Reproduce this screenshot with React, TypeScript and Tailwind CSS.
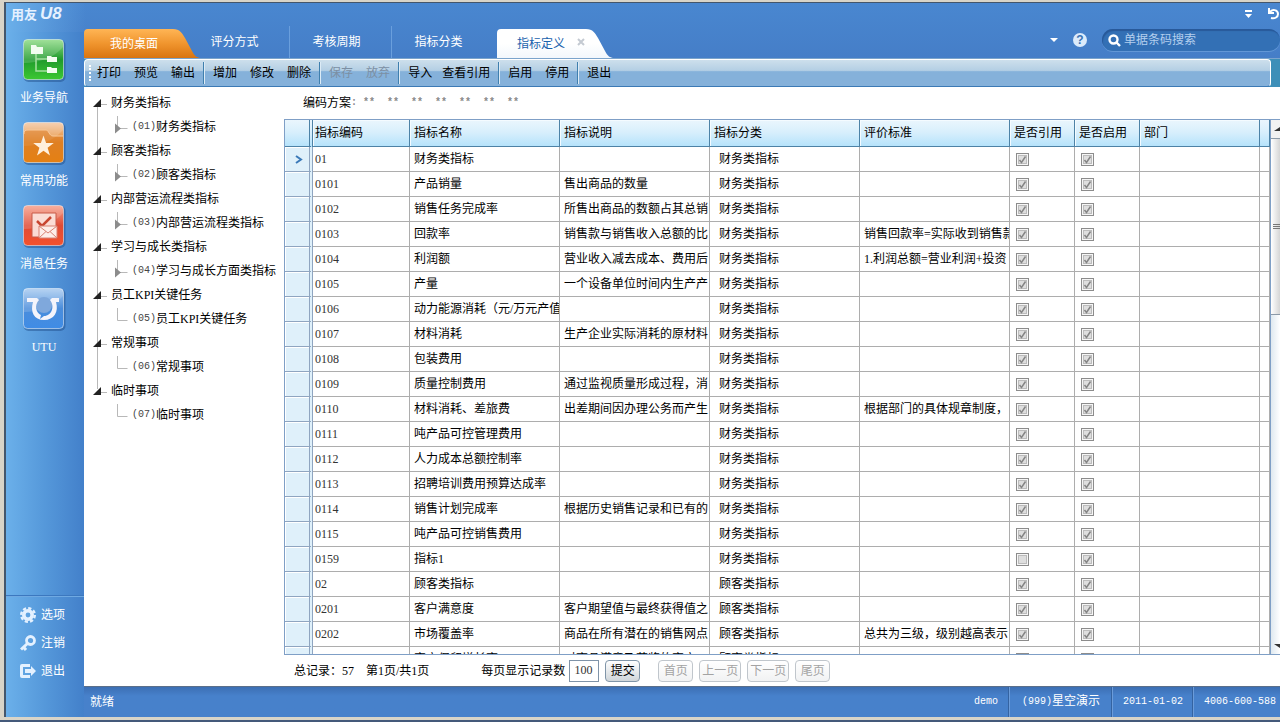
import type { ReactNode } from 'react'

const sideItems = [
  { label: '业务导航', icon: <NavIcon /> },
  { label: '常用功能', icon: <StarIcon /> },
  { label: '消息任务', icon: <TaskIcon /> },
  { label: 'UTU', icon: <UtuIcon /> },
]

const sideLinks = [
  { label: '选项', icon: <GearIcon /> },
  { label: '注销', icon: <KeyIcon /> },
  { label: '退出', icon: <ExitIcon /> },
]

const toolGroups = [
  { items: ['打印', '预览', '输出'] },
  { items: ['增加', '修改', '删除'] },
  { items: ['保存', '放弃'], disabled: true },
  { items: ['导入', '查看引用'], tight: true },
  { items: ['启用', '停用'] },
  { items: ['退出'] },
]

const tree = [
  { label: '财务类指标', code: '(01)', child: '财务类指标', more: true },
  { label: '顾客类指标', code: '(02)', child: '顾客类指标', more: true },
  { label: '内部营运流程类指标', code: '(03)', child: '内部营运流程类指标', more: true },
  { label: '学习与成长类指标', code: '(04)', child: '学习与成长方面类指标', more: true },
  { label: '员工KPI关键任务', code: '(05)', child: '员工KPI关键任务', more: false },
  { label: '常规事项', code: '(06)', child: '常规事项', more: false },
  { label: '临时事项', code: '(07)', child: '临时事项', more: false },
]

type Row = {
  code: string
  name: string
  desc?: string
  kind: string
  standard?: string
  unused?: boolean
}

const rows: Row[] = [
  { code: '01', name: '财务类指标', kind: '财务类指标' },
  { code: '0101', name: '产品销量', desc: '售出商品的数量', kind: '财务类指标' },
  { code: '0102', name: '销售任务完成率', desc: '所售出商品的数额占其总销', kind: '财务类指标' },
  { code: '0103', name: '回款率', desc: '销售款与销售收入总额的比', kind: '财务类指标', standard: '销售回款率=实际收到销售款' },
  { code: '0104', name: '利润额', desc: '营业收入减去成本、费用后', kind: '财务类指标', standard: '1.利润总额=营业利润+投资' },
  { code: '0105', name: '产量', desc: '一个设备单位时间内生产产', kind: '财务类指标' },
  { code: '0106', name: '动力能源消耗（元/万元产值', kind: '财务类指标' },
  { code: '0107', name: '材料消耗', desc: '生产企业实际消耗的原材料', kind: '财务类指标' },
  { code: '0108', name: '包装费用', kind: '财务类指标' },
  { code: '0109', name: '质量控制费用', desc: '通过监视质量形成过程，消', kind: '财务类指标' },
  { code: '0110', name: '材料消耗、差旅费', desc: '出差期间因办理公务而产生', kind: '财务类指标', standard: '根据部门的具体规章制度，' },
  { code: '0111', name: '吨产品可控管理费用', kind: '财务类指标' },
  { code: '0112', name: '人力成本总额控制率', kind: '财务类指标' },
  { code: '0113', name: '招聘培训费用预算达成率', kind: '财务类指标' },
  { code: '0114', name: '销售计划完成率', desc: '根据历史销售记录和已有的', kind: '财务类指标' },
  { code: '0115', name: '吨产品可控销售费用', kind: '财务类指标' },
  { code: '0159', name: '指标1', kind: '财务类指标', unused: true },
  { code: '02', name: '顾客类指标', kind: '顾客类指标' },
  { code: '0201', name: '客户满意度', desc: '客户期望值与最终获得值之', kind: '顾客类指标' },
  { code: '0202', name: '市场覆盖率', desc: '商品在所有潜在的销售网点', kind: '顾客类指标', standard: '总共为三级，级别越高表示' },
  { code: '0203', name: '客户保留增长率', desc: '对商品满意及获奖的客户', kind: '顾客类指标' },
]

const headers = ['指标编码', '指标名称', '指标说明', '指标分类', '评价标准', '是否引用', '是否启用', '部门']

function Tile({ id, from, mid, to, children }: { id: string; from: string; mid: string; to: string; children: ReactNode }) {
  return (
    <svg className="h-11 w-11" viewBox="0 0 44 44" fill="none">
      <defs>
        <linearGradient id={id} x1="0" y1="0" x2="0" y2="1">
          <stop offset="0" stopColor={from} />
          <stop offset="0.5" stopColor={mid} />
          <stop offset="1" stopColor={to} />
        </linearGradient>
      </defs>
      <rect x="1.5" y="2" width="42" height="42" rx="5" fill="#1c4a85" opacity="0.45" />
      <rect x="1.5" y="1.5" width="40" height="40" rx="4" fill={`url(#${id})`} stroke="#ffffff" strokeOpacity="0.5" />
      <path d="M2 25C16 25 32 20 41 9V5a3 3 0 0 0-3-3H5a3 3 0 0 0-3 3Z" fill="#fff" opacity="0.16" />
      {children}
    </svg>
  )
}

function NavIcon() {
  return (
    <Tile id="tile-nav" from="#8fdc86" mid="#1f9a2c" to="#3cc832">
      <path d="M14 16v17h11M14 21h11" stroke="#a5e0a0" strokeWidth="1.5" />
      <path d="M9 7h5l1 2h6v7H9ZM25 18h4l1 1h5v5H25ZM25 29h4l1 1h5v5H25Z" fill="#f2fdf0" />
    </Tile>
  )
}

function StarIcon() {
  return (
    <Tile id="tile-star" from="#f3c7a4" mid="#e58a2c" to="#f08a0c">
      <path d="M2 13c0-3 1-4 4-4h18c3 0 3 6 7 6h10v23a3 3 0 0 1-3 3H5a3 3 0 0 1-3-3Z" fill="#d9761a" opacity="0.5" />
      <path d="M2 13c0-3 1-4 4-4h18c3 0 3 6 7 6h10" stroke="#f9c99a" />
      <path d="m21.500 14.500 2.600 7.600h7.700l-6.200 4.600 2.400 7.800-6.500-4.700-6.500 4.700 2.400-7.800-6.200-4.600h7.700Z" fill="#fff0dd" />
    </Tile>
  )
}

function TaskIcon() {
  return (
    <Tile id="tile-task" from="#f7a18c" mid="#df4b35" to="#f4512c">
      <path d="M10 9h24v24H10Z" fill="#fbdcd4" stroke="#c85a48" />
      <path d="m15 17 5 5 9-9" stroke="#c8452f" strokeWidth="2.500" />
      <path d="M17 22h18v12H17Z" fill="#fdeee9" stroke="#d98272" />
      <path d="m17 22 9 7 9-7M17 34l7-6.500M35 34l-7-6.500" stroke="#d98272" />
    </Tile>
  )
}

function UtuIcon() {
  return (
    <Tile id="tile-utu" from="#a9cbf0" mid="#4a8ddb" to="#3f8ce6">
      <circle cx="22" cy="18" r="8" fill="#7fa8dc" />
      <path d="M5 11h10l2 2c-5 5-3 13 2 15l-1 4 4-3c8 0 11-10 6-16l2-2h7v4h-3c3 10-2 18-12 18S8 25 11 15H5Z" fill="#f4f4fb" />
    </Tile>
  )
}

function GearIcon() {
  return (
    <svg className="h-4 w-4" viewBox="0 0 16 16" fill="none" stroke="#e4f1ff">
      <circle cx="8" cy="8" r="4.200" strokeWidth="3.600" />
      <circle cx="8" cy="8" r="6.800" strokeWidth="2.400" strokeDasharray="3.200 2.141" />
    </svg>
  )
}

function KeyIcon() {
  return (
    <svg className="h-4 w-4" viewBox="0 0 16 16" fill="none" stroke="#e4f1ff">
      <circle cx="10.500" cy="5.500" r="4" strokeWidth="2.800" />
      <path d="m7.500 8.500-6.500 6M3.500 12l2.500 3" strokeWidth="3" />
    </svg>
  )
}

function ExitIcon() {
  return (
    <svg className="h-4 w-4" viewBox="0 0 16 16" fill="#e4f1ff">
      <path d="M2 1h8v3H3v8h7v3H2a2 2 0 0 1-2-2V3a2 2 0 0 1 2-2Z" />
      <path d="M5 6h6V3l5 5-5 5v-3H5Z" />
    </svg>
  )
}

function Tab({ label }: { label: string }) {
  return (
    <button className="h-8 w-[102px] border-r border-[#6a9fdd] pr-2 text-center text-white">{label}</button>
  )
}

function ShapedTab({ label, active }: { label: string; active?: boolean }) {
  return (
    <button className={`relative flex h-[29px] w-[116px] items-center justify-center ${active ? 'pr-7 text-[#1a62ad]' : 'pr-4 text-white'}`}>
      <svg className="absolute inset-0 h-full w-full" viewBox="0 0 116 29" preserveAspectRatio="none">
        <defs>
          <linearGradient id={active ? 'tab-white' : 'tab-orange'} x1="0" y1="0" x2="0" y2="1">
            <stop offset="0" stopColor={active ? '#ffffff' : '#ffb555'} />
            <stop offset="0.5" stopColor={active ? '#ffffff' : '#f0952e'} />
            <stop offset="1" stopColor={active ? '#f2f7fc' : '#d97410'} />
          </linearGradient>
        </defs>
        <path d="M0 29V4a4 4 0 0 1 4-4h85c7 0 9 4 12 9l7 13c3 6 5 6 8 7Z" fill={`url(#${active ? 'tab-white' : 'tab-orange'})`} />
      </svg>
      <span className="relative">{label}</span>
      {active && (
        <svg className="absolute top-[9px] right-7 h-2 w-2" viewBox="0 0 8 8" stroke="#c4cad2" strokeWidth="2">
          <path d="m1 1 6 6M7 1 1 7" />
        </svg>
      )}
    </button>
  )
}

function Check({ checked, label }: { checked: boolean; label: string }) {
  return (
    <span className="relative block h-[13px] w-[13px]">
      <input
        type="checkbox"
        aria-label={label}
        defaultChecked={checked}
        disabled
        className="peer block h-[13px] w-[13px] appearance-none border border-[#8c8c8c] bg-[#dedede] shadow-[inset_0_0_0_1px_#f6f6f6,inset_0_0_0_2px_#bcbcbc]"
      />
      <svg className="absolute inset-0 hidden h-[13px] w-[13px] peer-checked:block" viewBox="0 0 13 13" fill="none" stroke="#858585" strokeWidth="1.500">
        <path d="m3.500 7 2 2.500 4-6" />
      </svg>
    </span>
  )
}

function Sidebar() {
  return (
    <nav className="flex w-[78px] shrink-0 flex-col bg-linear-to-r from-[#6bb0ea] via-[#5598da] via-50% to-[#4380ca] text-white">
      <div className="flex flex-col pt-[6px] pr-[2px]">
        {sideItems.map((item) => (
          <button key={item.label} className="flex h-[83px] flex-col items-center gap-2">
            {item.icon}
            <span>{item.label}</span>
          </button>
        ))}
      </div>
      <div className="mt-auto mb-8 flex flex-col border-t border-[#3c78bf] pt-[5px] shadow-[inset_0_1px_0_#6fa9e2]">
        {sideLinks.map((item) => (
          <button key={item.label} className="flex h-7 items-center gap-[5px] pl-[14px]">
            {item.icon}
            <span>{item.label}</span>
          </button>
        ))}
      </div>
    </nav>
  )
}

function TabBar() {
  return (
    <div className="flex h-[26px] items-end">
      <ShapedTab label="我的桌面" />
      <div className="-ml-3 flex">
        <Tab label="评分方式" />
        <Tab label="考核周期" />
        <button className="h-8 w-[105px] pr-3 text-center text-white">指标分类</button>
      </div>
      <ShapedTab label="指标定义" active />
      <div className="ml-auto flex h-8 items-center pb-1">
        <button aria-label="更多" className="mr-[15px]">
          <svg className="h-2 w-2" viewBox="0 0 8 8" fill="#fff"><path d="M0 2h8L4 6Z" /></svg>
        </button>
        <button className="mr-[15px] h-[14px] w-[14px] rounded-full bg-[#dcebfb] font-['Liberation_Sans',sans-serif] text-xs leading-[14px] font-bold text-[#3a72b4]">?</button>
        <label className="flex h-[22px] w-[178px] items-center gap-[3px] rounded-full bg-[#3370b5] pl-[6px] shadow-[inset_1px_2px_1px_#28599a,0_1px_0_#6297d6]">
          <svg className="h-[13px] w-[13px] shrink-0" viewBox="0 0 13 13" fill="none" stroke="#fff" strokeWidth="2.400">
            <circle cx="5.500" cy="5.500" r="4" />
            <path d="m8.500 8.500 3.500 3.500" />
          </svg>
          <input aria-label="单据条码搜索" placeholder="单据条码搜索" className="w-32 bg-transparent outline-none placeholder:text-[#b4cfee]" />
        </label>
      </div>
    </div>
  )
}

function Toolbar() {
  return (
    <div className="flex h-[29px] shrink-0 border-t border-[#7ba4cc] bg-[#3d8fb8]">
      <div className="mr-[9px] flex flex-1 items-center rounded-sm border border-white border-b-[#3c7ab5] bg-linear-to-b from-[#cddfec] via-[#b4cfe4] via-40% to-[#85b1da] to-45% pl-1">
        <span className="h-4 w-[3px] border-l-2 border-dotted border-white" />
        {toolGroups.map((group, i) => (
          <div
            key={i}
            className={`flex h-[22px] items-center ${group.tight ? 'gap-[10px]' : 'gap-[13px]'} ${i > 0 ? 'ml-2 border-l border-[#3f7fae] pl-[9px] shadow-[inset_1px_0_0_#dcebf6]' : 'pl-[5px]'} ${group.disabled ? 'text-[#7c8fa3]' : 'text-black'}`}
          >
            {group.items.map((item) => (
              <button key={item} disabled={group.disabled}>{item}</button>
            ))}
          </div>
        ))}
      </div>
    </div>
  )
}

function IndicatorTree() {
  return (
    <aside className="w-[200px] shrink-0 pt-1 pl-2 whitespace-nowrap">
      <ul>
        {tree.map((node, i) => (
          <li key={node.code} className="flex">
            <svg className="h-12 w-[19px] shrink-0" viewBox="0 0 19 48" fill="none" stroke="#b8b8b8">
              <path d={i === 0 ? 'M5.500 14v34' : i === tree.length - 1 ? 'M5.500 0v10' : 'M5.500 0v48'} />
              <path d="M9 13.500h6" />
              <path d="M9 8v8H1Z" fill="#222" stroke="none" />
            </svg>
            <div className="leading-6">
              <div>{node.label}</div>
              <div className="flex">
                <svg className="h-6 w-[21px] shrink-0" viewBox="0 0 21 24" fill="none" stroke="#b8b8b8">
                  <path d="M6.500 1v12.500h10" />
                  {node.more && <path d="M4 8.500v10l6-5Z" fill="#8c8c8c" stroke="none" />}
                </svg>
                <span className="font-['Liberation_Mono',monospace] text-[10px] text-[#444]">{node.code}</span>
                <span>{node.child}</span>
              </div>
            </div>
          </li>
        ))}
      </ul>
    </aside>
  )
}

function IndicatorTable() {
  return (
    <div className="flex min-h-0 flex-1 border-y border-[#7f9fc6]">
      <div className="min-w-0 flex-1 overflow-hidden border-x border-[#7f9fc6]">
        <table className="w-full table-fixed border-separate border-spacing-0 whitespace-nowrap">
          <colgroup>
            <col className="w-[28px]" />
            <col className="w-[97px]" />
            <col className="w-[150px]" />
            <col className="w-[150px]" />
            <col className="w-[150px]" />
            <col className="w-[150px]" />
            <col className="w-[65px]" />
            <col className="w-[65px]" />
            <col className="w-[120px]" />
            <col />
          </colgroup>
          <thead>
            <tr className="h-[27px] bg-linear-to-b from-[#eaf6fd] via-[#d8effc] via-45% to-[#b3e2fb] text-left [&>th]:border-r [&>th]:border-b [&>th]:border-[#4d82a6] [&>th]:font-normal">
              <th className="border-r-4! border-double" />
              {headers.map((title, i) => (
                <th key={title} className={`${i === 0 ? 'pl-[2px]' : 'pl-1'} shadow-[inset_1px_1px_0_#f4fbff]`}>{title}</th>
              ))}
              <th />
            </tr>
          </thead>
          <tbody>
            {rows.map((row, i) => (
              <tr key={row.code} className="h-[25px] [&>td]:overflow-hidden [&>td]:border-r [&>td]:border-b [&>td]:border-[#adadad] [&>td]:py-0 [&>td]:pr-px [&>td]:pl-1 [&>td]:leading-6">
                <td className="border-r-4! border-double border-[#8fa5c0]! bg-[#dff0fa] shadow-[inset_1px_1px_0_#fff]">
                  {i === 0 && (
                    <svg className="mx-auto block h-[9px] w-2" viewBox="0 0 8 9" fill="none" stroke="#3a79b8" strokeWidth="2">
                      <path d="m1 1 5 3.500L1 8" />
                    </svg>
                  )}
                </td>
                <td className="pl-[2px]! text-[#333]">{row.code}</td>
                <td>{row.name}</td>
                <td>{row.desc}</td>
                <td className="pl-[9px]!">{row.kind}</td>
                <td>{row.standard}</td>
                <td className="pl-[6px]!"><Check checked={!row.unused} label={`${row.code} 是否引用`} /></td>
                <td className="pl-[6px]!"><Check checked label={`${row.code} 是否启用`} /></td>
                <td />
                <td />
              </tr>
            ))}
          </tbody>
        </table>
      </div>
      <div className="flex w-[9px] shrink-0 flex-col overflow-hidden bg-linear-to-r from-[#dfe9f0] to-white">
        <svg className="h-[18px] w-[9px] shrink-0 bg-[#f2f2f2]" viewBox="0 0 9 18"><path d="M3 11h6V7Z" fill="#333" /></svg>
        <div className="flex h-[177px] shrink-0 flex-col justify-center gap-px border-y border-[#8c9aa8] bg-linear-to-r from-white to-[#d5d5d5] pl-[2px]">
          <span className="h-px bg-[#777]" />
          <span className="h-px bg-[#777]" />
          <span className="h-px bg-[#777]" />
        </div>
        <svg className="mt-auto h-[18px] w-[9px] shrink-0" viewBox="0 0 9 18"><path d="M3 8h6v4Z" fill="#333" /></svg>
      </div>
    </div>
  )
}

function Pager() {
  return (
    <div className="flex h-[31px] shrink-0 items-center pl-[10px]">
      <span>总记录：57</span>
      <span className="ml-3">第1页/共1页</span>
      <label className="ml-[52px] flex items-center gap-1">
        每页显示记录数
        <input defaultValue="100" className="h-[22px] w-[30px] border border-[#7f93a8] bg-white pl-1 text-[#333]" />
      </label>
      <button className="ml-[6px] h-[22px] w-[35px] rounded-sm border border-[#8095a8] bg-linear-to-b from-white to-[#d0d6da]">提交</button>
      <div className="ml-[18px] flex gap-[6px] text-[#a3a3a3] [&>button]:h-[22px] [&>button]:rounded-sm [&>button]:border [&>button]:border-[#c0c6cc] [&>button]:bg-linear-to-b [&>button]:from-white [&>button]:to-[#f1f2f3] [&>button]:whitespace-nowrap">
        <button disabled className="w-[35px]">首页</button>
        <button disabled className="w-[42px]">上一页</button>
        <button disabled className="w-[42px]">下一页</button>
        <button disabled className="w-[35px]">尾页</button>
      </div>
    </div>
  )
}

function StatusBar() {
  return (
    <footer className="flex h-[31px] shrink-0 items-center border-t border-[#5b6f8a] bg-linear-to-b from-[#3c6fb4] to-[#4781cb] to-30% pl-[6px] text-white">
      <span className="mr-auto">就绪</span>
      <div className="flex h-full items-center font-['Liberation_Mono','Noto_Sans_CJK_SC',monospace] text-[10px] [&>span]:flex [&>span]:h-full [&>span]:items-center [&>span]:border-l [&>span]:border-[#6b9cda] [&>span]:shadow-[-1px_0_0_#3463a1]">
        <span className="border-l-0! px-[11px] shadow-none!">demo</span>
        <span className="px-3">(999)<b className="text-xs font-normal">星空演示</b></span>
        <span className="px-[10px]">2011-01-02</span>
        <span className="pr-1 pl-[10px]">4006-600-588</span>
      </div>
    </footer>
  )
}

export default function App() {
  return (
    <div className="flex h-screen flex-col overflow-hidden border-b-2 border-[#44597a] bg-[#d8d4c8] pt-[2px] pb-[3px] pl-1 font-['Liberation_Serif','Noto_Sans_CJK_SC',serif] text-xs text-black">
      <div className="flex min-h-0 flex-1 flex-col border-t border-l-2 border-[#44566b] bg-linear-to-b from-[#4987d0] to-[#447bc5] to-10%">
        <header className="flex h-[29px] shrink-0 items-start bg-linear-to-r from-[#6bb0ea] to-transparent to-[80px] pt-[3px] pl-[5px]">
          <div className="flex items-baseline gap-[3px] font-['Noto_Sans_CJK_SC',sans-serif] text-[13px] leading-4 font-bold text-[#e6f1ff]">
            用友 <i className="font-['Liberation_Sans',sans-serif] text-[17px] leading-4">U8</i>
          </div>
          <div className="mt-[2px] ml-auto flex gap-4 text-white">
            <button aria-label="折叠">
              <svg className="h-2 w-[7px]" viewBox="0 0 7 8" fill="#fff"><path d="M0 0h7v2H0ZM0 4h7L3.500 8Z" /></svg>
            </button>
            <button aria-label="刷新">
              <svg className="h-3 w-3" viewBox="0 0 12 12" fill="none" stroke="#fff" strokeWidth="2">
                <path d="M1 0v5h5M1.500 5C4 0 10 2 10 6c0 3-3 5-7 4" />
              </svg>
            </button>
          </div>
        </header>
        <div className="flex min-h-0 flex-1">
          <Sidebar />
          <div className="flex min-w-0 flex-1 flex-col">
            <TabBar />
            <Toolbar />
            <main className="flex min-h-0 flex-1 bg-white">
              <IndicatorTree />
              <section className="flex min-w-0 flex-1 flex-col">
                <div className="flex h-8 shrink-0 items-center pl-[19px]">
                  编码方案
                  <pre className="font-['Liberation_Mono',monospace] text-[10px] font-bold text-[#888]">: **  **  **  **  **  **  **</pre>
                </div>
                <IndicatorTable />
                <Pager />
              </section>
            </main>
            <StatusBar />
          </div>
        </div>
      </div>
    </div>
  )
}
